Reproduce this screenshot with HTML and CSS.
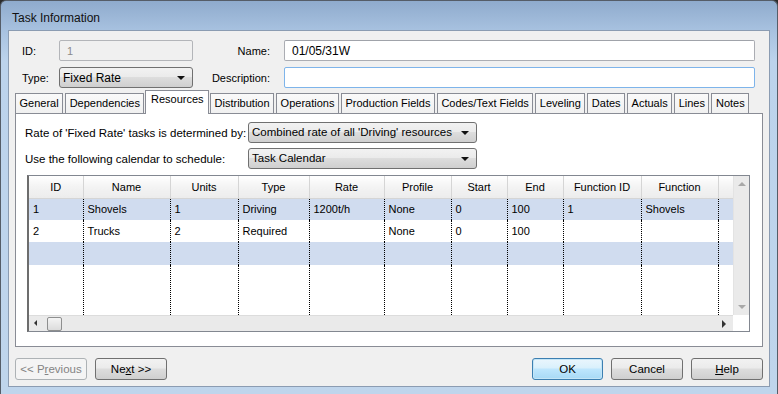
FILE: index.html
```html
<!DOCTYPE html>
<html lang="en">
<head>
  <meta charset="UTF-8" />
  <title>Task Information</title>
  <link rel="stylesheet" href="styles.css">
</head>
<body>
  <div class="window">
    <div class="titlebar">Task Information</div>
    <div class="client">
      <div class="form">
        <label>ID:</label>
        <div class="field disabled">1</div>
        <label class="right">Name:</label>
        <div class="field">01/05/31W</div>
        <label>Type:</label>
        <div class="combo">Fixed Rate</div>
        <label class="right">Description:</label>
        <div class="field focus"></div>
      </div>

      <ul class="tabs">
        <li>General</li>
        <li>Dependencies</li>
        <li class="active">Resources</li>
        <li>Distribution</li>
        <li>Operations</li>
        <li>Production Fields</li>
        <li>Codes/Text Fields</li>
        <li>Leveling</li>
        <li>Dates</li>
        <li>Actuals</li>
        <li>Lines</li>
        <li>Notes</li>
      </ul>

      <div class="panel">
        <div class="opt-row">
          <span class="opt-label">Rate of 'Fixed Rate' tasks is determined by:</span>
          <div class="combo wide">Combined rate of all 'Driving' resources</div>
        </div>
        <div class="opt-row">
          <span class="opt-label">Use the following calendar to schedule:</span>
          <div class="combo wide">Task Calendar</div>
        </div>

        <div class="grid">
          <div class="grid-body">
            <table>
              <thead>
                <tr>
                  <th class="c-id">ID</th>
                  <th class="c-name">Name</th>
                  <th class="c-units">Units</th>
                  <th class="c-type">Type</th>
                  <th class="c-rate">Rate</th>
                  <th class="c-profile">Profile</th>
                  <th class="c-start">Start</th>
                  <th class="c-end">End</th>
                  <th class="c-fid">Function ID</th>
                  <th class="c-fn">Function</th>
                  <th class="c-pad"></th>
                </tr>
              </thead>
              <tbody>
                <tr class="alt">
                  <td>1</td><td>Shovels</td><td>1</td><td>Driving</td><td>1200t/h</td>
                  <td>None</td><td>0</td><td>100</td><td>1</td><td>Shovels</td><td class="pad"></td>
                </tr>
                <tr>
                  <td>2</td><td>Trucks</td><td>2</td><td>Required</td><td></td>
                  <td>None</td><td>0</td><td>100</td><td></td><td></td><td class="pad"></td>
                </tr>
                <tr class="alt">
                  <td></td><td></td><td></td><td></td><td></td>
                  <td></td><td></td><td></td><td></td><td></td><td class="pad"></td>
                </tr>
                <tr class="filler">
                  <td></td><td></td><td></td><td></td><td></td>
                  <td></td><td></td><td></td><td></td><td></td><td class="pad"></td>
                </tr>
              </tbody>
            </table>
            <div class="vscroll">
              <span class="arrow up"></span>
              <span class="arrow down"></span>
            </div>
          </div>
          <div class="hscroll">
            <span class="arrow left"></span>
            <span class="thumb"></span>
            <span class="arrow right"></span>
          </div>
        </div>
      </div>

      <div class="buttons">
        <button class="btn" disabled>&lt;&lt; P<u>r</u>evious</button>
        <button class="btn">Ne<u>x</u>t &gt;&gt;</button>
        <span class="spacer"></span>
        <button class="btn default">OK</button>
        <button class="btn">Cancel</button>
        <button class="btn"><u>H</u>elp</button>
      </div>
    </div>
  </div>
</body>
</html>
```

FILE: styles.css
```css
* { margin: 0; padding: 0; box-sizing: border-box; }
body {
  background: #2b2b2b;
  font-family: "Liberation Sans", Arial, sans-serif;
  font-size: 11px;
  color: #000;
}
.window {
  width: 778px;
  height: 394px;
  border: 1px solid #555d68;
  border-bottom: none;
  border-radius: 6px 6px 0 0;
  background: linear-gradient(#8fabcd 0, #a8c2e0 30px, #bcd3ec 60px, #bfd5ec 100%);
  display: flex;
  flex-direction: column;
}
.titlebar {
  height: 29px;
  padding: 10px 0 0 11px;
  font-size: 12px;
  color: #111;
}
.client {
  margin: 0 7px;
  height: 357px;
  background: #f0f0f0;
  border: 1px solid #8b9cb2;
  padding: 0 6px;
  display: flex;
  flex-direction: column;
}

/* top form */
.form {
  display: grid;
  grid-template-columns: 37px 134px 91px 471px;
  grid-auto-rows: 21px;
  row-gap: 6px;
  align-items: center;
  padding: 9px 0 0 7px;
}
.form label.right {
  text-align: right;
  padding-right: 14px;
}
.field {
  height: 21px;
  background: #fff;
  border: 1px solid #abadb3;
  border-top-color: #a0a3aa;
  border-radius: 2px;
  padding: 3px 0 0 7px;
  font-size: 12px;
}
.field.disabled {
  background: #f0f0f0;
  border-color: #b3b5b9;
  color: #8a8a8a;
  font-size: 11px;
  padding-top: 4px;
}
.field.focus {
  border-color: #7eb4ea;
}
.combo {
  position: relative;
  height: 21px;
  border: 1px solid #707070;
  border-radius: 3px;
  background: linear-gradient(#f2f2f2 0, #ebebeb 45%, #dddddd 50%, #cfcfcf 100%);
  padding: 3px 0 0 3px;
  font-size: 12px;
}
.combo::after {
  content: "";
  position: absolute;
  right: 7px;
  top: 8px;
  border-left: 4px solid transparent;
  border-right: 4px solid transparent;
  border-top: 4px solid #111;
}

/* tabs */
.tabs {
  list-style: none;
  display: flex;
  gap: 2px;
  margin-top: 5px;
  height: 20px;
  align-items: flex-end;
  position: relative;
  z-index: 1;
}
.tabs li {
  height: 20px;
  padding: 3px 3.5px 0;
  border: 1px solid #898c95;
  border-bottom: none;
  background: linear-gradient(#fafafa, #f0f0f0);
  white-space: nowrap;
}
.tabs li.active {
  height: 24px;
  margin: 0 -1px -1px;
  padding: 2px 4.5px 0;
  background: #fff;
}
.panel {
  height: 234px;
  background: #fff;
  border: 1px solid #898c95;
  padding: 8px 12px 0 9px;
}
.opt-row {
  display: flex;
  align-items: center;
  height: 21px;
  margin-bottom: 5px;
}
.opt-label {
  width: 223px;
  font-size: 11.5px;
}
.combo.wide {
  width: 229px;
  font-size: 11.5px;
}

/* grid */
.grid {
  margin: 6px 0 0 2px;
  border: 1px solid #828790;
  border-left: 2px solid #6d6d6d;
  height: 157px;
}
.grid-body {
  display: flex;
  height: 139px;
  overflow: hidden;
}
table {
  border-collapse: collapse;
  table-layout: fixed;
  width: 704px;
}
th {
  height: 22px;
  font-weight: normal;
  background: linear-gradient(#ffffff, #f3f3f3 50%, #ececec);
  border-right: 1px solid #d5d5d5;
  border-bottom: 1px solid #d5d5d5;
}
td {
  height: 22px;
  padding: 0 0 0 4px;
  border-right: 1px dotted #000;
  white-space: nowrap;
}
td.pad, th.c-pad { border-right: none; }
tr.alt td { background: #d0dcef; }
tr.filler td { height: 50px; }
.c-id { width: 54px; }
.c-name { width: 87px; }
.c-units { width: 68px; }
.c-type { width: 71px; }
.c-rate { width: 75px; }
.c-profile { width: 67px; }
.c-start { width: 56px; }
.c-end { width: 56px; }
.c-fid { width: 78px; }
.c-fn { width: 77px; }
.c-pad { width: 15px; }

.vscroll {
  width: 16px;
  background: #eaeaea;
  border-left: 1px solid #e3e3e3;
  position: relative;
}
.hscroll {
  height: 16px;
  width: 704px;
  background: #eaeaea;
  border-top: 1px solid #dcdcdc;
  position: relative;
}
.arrow {
  position: absolute;
  width: 0;
  height: 0;
}
.arrow.up {
  top: 6px; left: 4px;
  border-left: 4px solid transparent;
  border-right: 4px solid transparent;
  border-bottom: 4px solid #a8a8a8;
}
.arrow.down {
  bottom: 6px; left: 4px;
  border-left: 4px solid transparent;
  border-right: 4px solid transparent;
  border-top: 4px solid #a8a8a8;
}
.arrow.left {
  top: 4px; left: 5px;
  border-top: 3px solid transparent;
  border-bottom: 3px solid transparent;
  border-right: 3px solid #333;
}
.arrow.right {
  top: 4px; right: 7px;
  border-top: 4px solid transparent;
  border-bottom: 4px solid transparent;
  border-left: 4px solid #333;
}
.thumb {
  position: absolute;
  left: 18px;
  top: 1px;
  width: 15px;
  height: 14px;
  border: 1px solid #8e8f8f;
  border-radius: 2px;
  background: linear-gradient(#f4f4f4, #dcdcdc);
}

/* footer buttons */
.buttons {
  display: flex;
  gap: 8px;
  margin-top: 11px;
}
.spacer { flex: 1; }
.btn {
  width: 72px;
  height: 22px;
  font-family: inherit;
  font-size: 11.5px;
  color: #000;
  border: 1px solid #707070;
  border-radius: 3px;
  background: linear-gradient(#f2f2f2 0, #ebebeb 45%, #dddddd 50%, #cfcfcf 100%);
}
.btn:disabled {
  border-color: #adb2b5;
  background: #f4f4f4;
  color: #838383;
}
.btn.default {
  width: 71px;
  border-color: #3c7fb1;
  background: linear-gradient(#eaf6fd 0, #d9f0fc 45%, #bee6fd 50%, #a7d9f5 100%);
  box-shadow: inset 0 0 0 1px #c4e5f6;
}
```
